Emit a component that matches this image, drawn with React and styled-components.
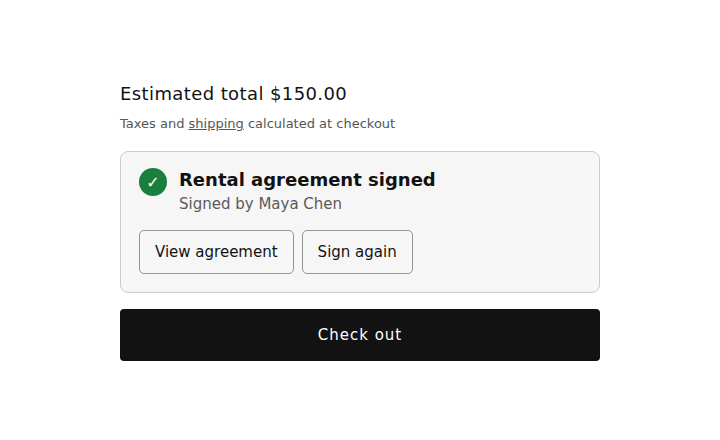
import React from 'react';
import styled, { createGlobalStyle } from 'styled-components';

const GlobalStyle = createGlobalStyle`
  html, body {
    margin: 0;
    background: #ffffff;
    font-family: "DejaVu Sans", sans-serif;
  }
`;

const Page = styled.div`
  width: 720px;
  height: 440px;
  box-sizing: border-box;
  padding: 80px 120px 0;
`;

const Total = styled.div`
  font-size: 18px;
  line-height: 27px;
  color: #121212;
  letter-spacing: 0.4px;
`;

const Note = styled.p`
  margin: 7px 0 0;
  font-size: 13px;
  line-height: 20px;
  color: #555555;

  a {
    color: inherit;
  }
`;

const Card = styled.section`
  margin-top: 17px;
  box-sizing: border-box;
  height: 142px;
  padding: 16px 18px;
  background: #f6f6f6;
  border: 1px solid #cccccc;
  border-radius: 8px;
`;

const Header = styled.div`
  display: flex;
  gap: 12px;
  align-items: flex-start;
`;

const Badge = styled.div`
  flex: none;
  width: 28px;
  height: 28px;
  border-radius: 50%;
  background: #1a7f3c;
  color: #ffffff;
  font-size: 16px;
  font-weight: 700;
  display: flex;
  align-items: center;
  justify-content: center;
`;

const Title = styled.div`
  font-size: 18px;
  line-height: 24px;
  font-weight: 700;
  color: #121212;
`;

const Sub = styled.div`
  font-size: 15px;
  line-height: 24px;
  color: #5a5a5a;
`;

const Actions = styled.div`
  display: flex;
  gap: 8px;
  margin-top: 14px;
`;

const Button = styled.button`
  height: 44px;
  padding: 0 15px;
  background: transparent;
  border: 1px solid #949494;
  border-radius: 5px;
  font: inherit;
  font-size: 15px;
  color: #121212;
`;

const Checkout = styled.button`
  display: block;
  width: 100%;
  height: 52px;
  margin-top: 16px;
  padding: 0 0 1px;
  background: #121212;
  border: 0;
  border-radius: 4px;
  font: inherit;
  font-size: 15px;
  letter-spacing: 1px;
  color: #ffffff;
`;

export default function App() {
  return (
    <Page>
      <GlobalStyle />
      <Total>Estimated total $150.00</Total>
      <Note>
        Taxes and <a href="#shipping">shipping</a> calculated at checkout
      </Note>
      <Card>
        <Header>
          <Badge>✓</Badge>
          <div>
            <Title>Rental agreement signed</Title>
            <Sub>Signed by Maya Chen</Sub>
          </div>
        </Header>
        <Actions>
          <Button>View agreement</Button>
          <Button>Sign again</Button>
        </Actions>
      </Card>
      <Checkout>Check out</Checkout>
    </Page>
  );
}
